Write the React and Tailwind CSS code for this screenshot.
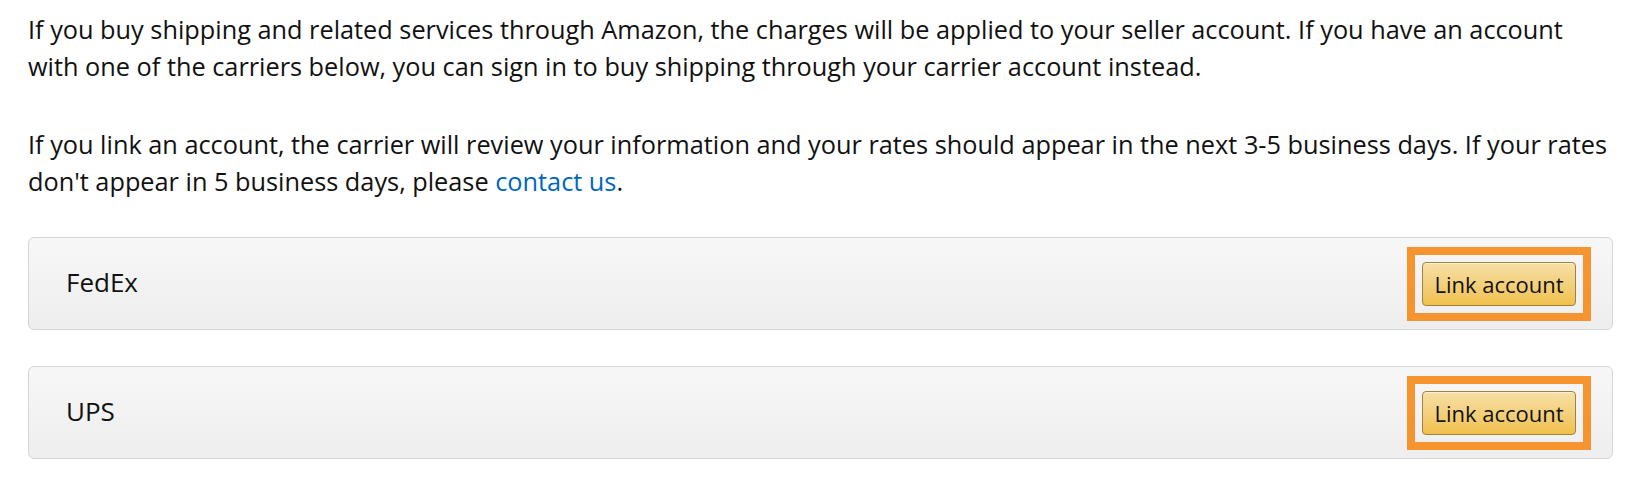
import React from 'react';

const carriers = ['FedEx', 'UPS'];

function CarrierRow({ name }) {
    return (
        <div className="flex items-center justify-between h-[93px] rounded-[6px] border border-[#d6d6d6] bg-gradient-to-b from-[#f7f7f7] to-[#eeeeee] pl-[37px] pr-[21px]">
            <span className="text-[26px] text-[#111111] leading-none -mt-[3px]">{name}</span>
            {/* highlighted link button */}
            <div className="border-[8px] border-[#f6942f] p-[7px]">
                <button className="w-[154px] h-[44px] rounded-[4px] border border-[#a0823a] bg-gradient-to-b from-[#f7dfa5] to-[#f0c14b] text-[22px] text-[#111111] leading-none shadow-[inset_0_1px_0_rgba(255,255,255,0.6)]">
                    Link account
                </button>
            </div>
        </div>
    );
}

export default function App() {
    return (
        <div className="bg-white w-[1638px] h-[485px] pl-[28px] pr-[25px] pt-[11px] font-['Open_Sans',sans-serif] text-[#111111]">
            <p className="text-[25.3px] leading-[37px] whitespace-nowrap">
                If you buy shipping and related services through Amazon, the charges will be applied to your seller account. If you have an account<br />
                with one of the carriers below, you can sign in to buy shipping through your carrier account instead.
            </p>
            <p className="text-[25.3px] leading-[37px] whitespace-nowrap mt-[41px]">
                If you link an account, the carrier will review your information and your rates should appear in the next 3-5 business days. If your rates<br />
                don't appear in 5 business days, please <a href="#" className="text-[#0066c0]">contact us</a>.
            </p>
            <div className="flex flex-col gap-[36px] mt-[37px]">
                {carriers.map((c) => (
                    <CarrierRow key={c} name={c} />
                ))}
            </div>
        </div>
    );
}
